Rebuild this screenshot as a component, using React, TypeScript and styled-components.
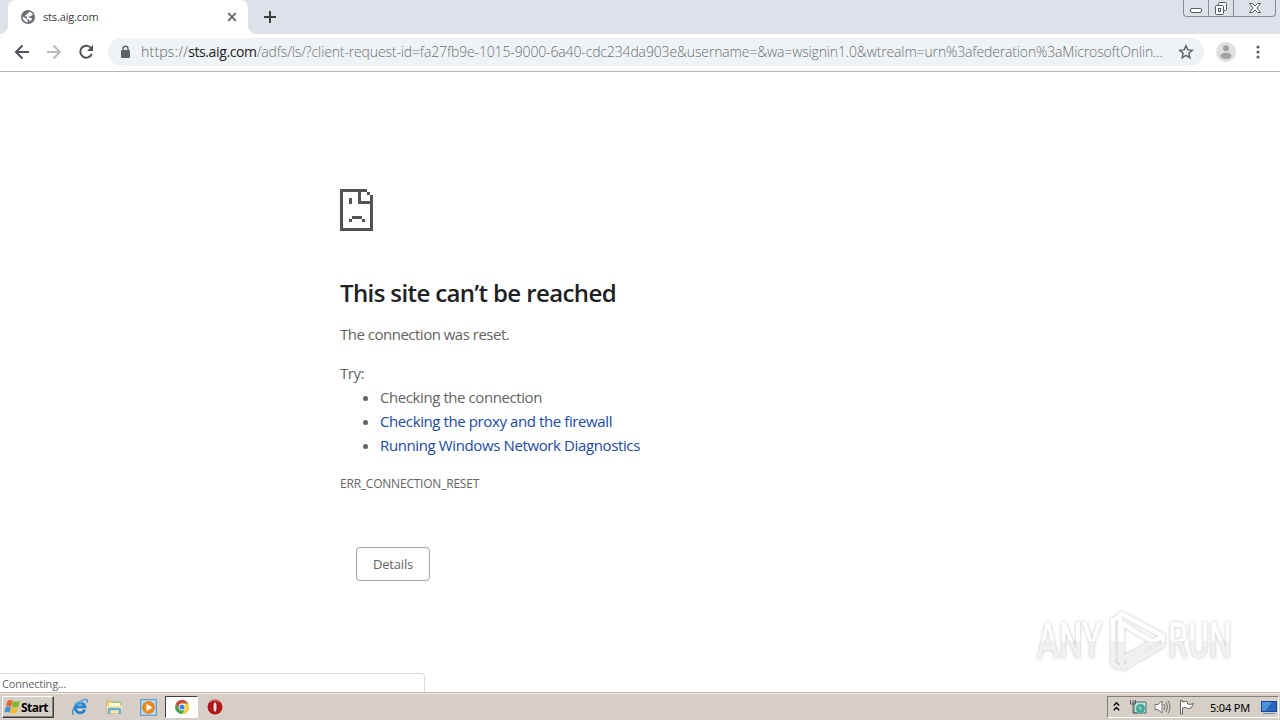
import React from "react";
import styled, { createGlobalStyle } from "styled-components";

const GlobalStyle = createGlobalStyle`
  * {
    box-sizing: border-box;
  }

  body {
    margin: 0;
    overflow: hidden;
    background: #ffffff;
    font-family: "Open Sans", "Noto Sans", sans-serif;
  }

  svg {
    display: block;
    flex: none;
  }
`;

const Screen = styled.div`
  position: relative;
  display: flex;
  flex-direction: column;
  width: 1280px;
  height: 720px;
`;

const TabStrip = styled.header`
  display: flex;
  align-items: flex-start;
  height: 34px;
  padding-left: 8px;
  background: #dee1e8;
`;

const Tab = styled.div`
  position: relative;
  display: flex;
  align-items: center;
  width: 240px;
  height: 34px;
  padding: 0 11px 0 13px;
  border-radius: 8px 8px 0 0;
  background: #ffffff;

  &::before,
  &::after {
    content: "";
    position: absolute;
    bottom: 0;
    width: 8px;
    height: 8px;
  }

  &::before {
    left: -8px;
    background: radial-gradient(circle at 0 0, #dee1e8 7.5px, #ffffff 8px);
  }

  &::after {
    right: -8px;
    background: radial-gradient(circle at 100% 0, #dee1e8 7.5px, #ffffff 8px);
  }
`;

const Text = styled.span<{ $size: number; $spacing?: number; $color?: string }>`
  font-size: ${(p) => p.$size}px;
  letter-spacing: ${(p) => p.$spacing ?? 0}px;
  color: ${(p) => p.$color ?? "#3c4043"};
  white-space: nowrap;
`;

const TabTitle = styled(Text)`
  flex: 1;
  margin: 0 0 2px 8px;
`;

const NewTab = styled.div`
  margin: 10px 0 0 15px;
`;

const WindowControls = styled.div`
  display: flex;
  width: 93px;
  height: 17px;
  margin: 0 4px 0 auto;
  border: 1px solid #878c96;
  border-top: 0;
  border-radius: 0 0 4px 4px;
`;

const WindowButton = styled.div<{ $width: number }>`
  display: flex;
  justify-content: center;
  width: ${(p) => p.$width}px;

  & + & {
    border-left: 1px solid #878c96;
  }
`;

const Toolbar = styled.nav`
  display: flex;
  align-items: center;
  height: 38px;
  padding: 0 13px 2px 13px;
  border-bottom: 1px solid #b4b6b8;
  background: #ffffff;
`;

const NavIcons = styled.div`
  display: flex;
  gap: 14px;
  width: 95px;
`;

const AddressBar = styled.div`
  display: flex;
  align-items: center;
  width: 1096px;
  height: 28px;
  padding: 0 10px 0 10px;
  border-radius: 14px;
  background: #f0f3f5;
`;

const Url = styled.div`
  flex: 1;
  display: flex;
  margin-left: 9px;
  font-weight: 300;
`;

const Host = styled(Text)`
  font-weight: 400;
`;

const Page = styled.main`
  flex: 1;
  padding: 117px 0 0 340px;
  color: #646464;
`;

const Title = styled.h1`
  margin: 47px 0 0;
  font: 600 24px/30px "Open Sans", "Noto Sans", sans-serif;
  letter-spacing: -0.61px;
  color: #202124;
`;

const Message = styled.p`
  margin: 14px 0 0;
  font-size: 15px;
  line-height: 24px;
  letter-spacing: -0.5px;

  & + & {
    margin-top: 15px;
  }
`;

const Suggestions = styled.ul`
  margin: 0;
  padding: 0 0 0 40px;
  font-size: 15px;
  line-height: 24px;
`;

const Suggestion = styled.li<{ $spacing: number }>`
  letter-spacing: ${(p) => p.$spacing}px;
`;

const Link = styled.a`
  color: #1a4a9f;
  text-decoration: none;
`;

const ErrorCode = styled.div`
  margin-top: 17px;
  font-size: 12px;
  line-height: 20px;
  letter-spacing: -0.22px;
`;

const DetailsButton = styled.button`
  display: block;
  width: 74px;
  height: 34px;
  margin: 53px 0 0 16px;
  padding: 0;
  border: 1px solid #a0a2a5;
  border-radius: 4px;
  background: #ffffff;
  color: #646464;
  font: 13px "Open Sans", "Noto Sans", sans-serif;
  letter-spacing: -0.2px;
`;

const StatusBubble = styled.div`
  position: absolute;
  left: 0;
  bottom: 28px;
  width: 425px;
  height: 19px;
  padding-left: 2px;
  border: 1px solid #dadada;
  border-width: 1px 1px 0 0;
  border-radius: 0 4px 0 0;
  background: #ffffff;
  line-height: 16px;
`;

const Watermark = styled.div`
  position: absolute;
  left: 1037px;
  top: 608px;
  display: flex;
  align-items: center;
  width: 200px;
  height: 66px;
  filter: drop-shadow(0 0 1.5px rgba(0, 0, 0, 0.25));
`;

const WatermarkWord = styled.span<{ $width: number; $scale: number }>`
  width: ${(p) => p.$width}px;
  font: 500 50px/66px Roboto, sans-serif;
  color: transparent;
  background: none;
  white-space: nowrap;
  transform: scaleX(${(p) => p.$scale});
  transform-origin: 0 50%;

  span {
    background: linear-gradient(#ffffff 50%, #f1f1f1 50%);
    background-clip: text;
    -webkit-background-clip: text;
  }
`;

const Taskbar = styled.footer`
  display: flex;
  align-items: flex-end;
  height: 28px;
  padding: 0 1px 2px 2px;
  border-top: 1px solid #bdbab3;
  background: #d6cfc7;
  box-shadow: inset 0 1px #f2efea;
`;

const StartButton = styled.div`
  display: flex;
  align-items: center;
  width: 52px;
  height: 22px;
  padding-left: 1px;
  border: 1px solid;
  border-color: #ffffff #404040 #404040 #ffffff;
  box-shadow: inset -1px -1px #848078;
  font: bold 12px "Noto Sans", sans-serif;
  letter-spacing: -0.5px;
  color: #000000;
`;

const QuickLaunch = styled.div`
  display: flex;
  margin-left: 9px;
`;

const TaskItem = styled.div<{ $active?: boolean }>`
  display: flex;
  align-items: center;
  justify-content: center;
  width: ${(p) => (p.$active ? 33 : 34)}px;
  height: 22px;
  border: 1px solid;
  border-color: ${(p) => (p.$active ? "#404040 #ffffff #ffffff #404040" : "transparent")};
  background: ${(p) => (p.$active ? "#ffffff" : "transparent")};
`;

const Tray = styled.div`
  display: flex;
  align-items: center;
  width: 172px;
  height: 22px;
  margin-left: auto;
  padding-left: 5px;
  border: 1px solid;
  border-color: #848078 #ffffff #ffffff #848078;
`;

const Clock = styled.span`
  width: 51px;
  margin-left: 15px;
  font: 11px "Noto Sans", sans-serif;
  letter-spacing: -0.2px;
  color: #000000;
  white-space: nowrap;
`;

const GlobeIcon = () => (
  <svg width="14" height="14" viewBox="0 0 14 14">
    <circle cx="7" cy="7" r="7" fill="#696d72" />
    <path d="M1.5 6.500 5 8.500l1.500.5v2.500l.8 1A5.600 5.600 0 0 1 1.500 6.500ZM4.500 5l2-1 1-1.800L9.500 2A5.500 5.500 0 0 1 12 4.800L10.500 5.500 9 6.500H7.500l.5 1.200 2.500.2.500 1.500-2.300 2.200-.7-2L6 8.500V6.500H4Z" fill="#fff" />
  </svg>
);

const FileSadIcon = () => (
  <svg width="33" height="42" viewBox="0 0 33 42" fill="#535353" shapeRendering="crispEdges">
    <path fillRule="evenodd" d="M0 0h27v3h3v3h3v36H0ZM3 3v36h27V15H18V3ZM21 3v9h9V9h-3V6h-3V3Z" />
    <path fill="#fff" d="M21 3h6v3h3v6h-9Z" />
    <path d="M27 3h3v3h-3ZM9 9h3v6H9ZM12 27h10v3H12ZM9 30h3v3H9ZM22 30h3v3h-3Z" />
  </svg>
);

const WindowsIcon = () => (
  <svg width="17" height="16" viewBox="0 0 17 16">
    <path d="M3.500 1.700Q6 .3 8.600 1.700L7.100 7.600Q5 6.200 2 7.600Z" fill="#e8662c" />
    <path d="M9 2Q12 3.500 16 1.700L14.400 7.400Q11.200 9 7.700 7.800Z" fill="#82b735" />
    <path d="M1.800 8Q4.600 6.700 7 8.200L5.500 13.700Q3.300 12.400.3 13.600Z" fill="#438fd4" />
    <path d="M7.500 8.300Q10.800 9.600 14.200 8L12.600 13.700Q9.300 15.300 6 13.900Z" fill="#f5bd28" />
  </svg>
);

const ExplorerIcon = () => (
  <svg width="18" height="18" viewBox="0 0 18 18" fill="none">
    <path d="M13.800 11.500A5 5 0 1 1 14 8.800H5.500" stroke="#2185cf" strokeWidth="2.800" />
    <path d="M3 16.500C-.5 16 2.500 8 8.500 4s9-3 7.200.8" stroke="#3a8fd0" strokeWidth="1.300" />
    <path d="M5 6.500a5 5 0 0 1 6-2" stroke="#79c8ef" />
  </svg>
);

const FolderIcon = () => (
  <svg width="17" height="17" viewBox="0 0 17 17">
    <path d="M1 2h5l1 2h8v10H1Z" fill="#efd477" stroke="#cfab4c" strokeWidth=".7" />
    <path d="M3 4h11v3H3Z" fill="#fffbd6" />
    <path d="M7 3h7" stroke="#69b978" />
    <path d="M1 7h15v7H1Z" fill="#f8e9a5" />
    <path d="M3 15v-4q0-1 1-1h9q1 0 1 1v4" stroke="#67aedb" strokeWidth="2.500" fill="none" />
  </svg>
);

const MediaIcon = () => (
  <svg width="17" height="17" viewBox="0 0 17 17">
    <rect x=".7" y=".7" width="15.600" height="15.600" fill="#b9dcf2" stroke="#4d92c9" />
    <circle cx="8.500" cy="8.500" r="6" fill="#ef891b" stroke="#db7415" strokeWidth=".7" />
    <path d="m6.500 4.700 6 3.800-6 3.800Z" fill="#fff" />
  </svg>
);

const ChromeIcon = () => (
  <svg width="14" height="14" viewBox="0 0 14 14">
    <circle cx="7" cy="7" r="7" fill="#42a553" />
    <path d="M.9 3.500A7 7 0 0 1 13.100 3.500H7L4 8.700Z" fill="#dd4a3c" />
    <path d="M13.100 3.500A7 7 0 0 1 7 14L10 8.700 7 3.500Z" fill="#fbcf38" />
    <circle cx="7" cy="7" r="3.400" fill="#fff" />
    <circle cx="7" cy="7" r="2.600" fill="#4285d6" />
  </svg>
);

const OperaIcon = () => (
  <svg width="16" height="16" viewBox="0 0 16 16">
    <circle cx="8" cy="8" r="7.500" fill="#b5151b" />
    <path d="M3 3.500a7 7 0 0 1 10 0" stroke="#e46561" fill="none" />
    <ellipse cx="8" cy="8" rx="2.100" ry="5.300" fill="#f4dedb" stroke="#8c0c12" />
  </svg>
);

const PlayMark = () => (
  <svg width="62" height="66" viewBox="0 0 62 66" fill="none" strokeWidth="4.500" strokeLinejoin="round">
    <defs>
      <linearGradient id="mark" gradientUnits="userSpaceOnUse" x1="0" y1="0" x2="0" y2="66">
        <stop offset=".5" stopColor="#ffffff" />
        <stop offset=".5" stopColor="#f1f1f1" />
      </linearGradient>
    </defs>
    <g stroke="url(#mark)">
      <path d="M13 9 7 12v44l7 4M14 5v50" />
      <path d="M14 5 57 28 16 51V15l31 19" />
      <path d="m16 61 41-24V28M16 61v-8" />
    </g>
  </svg>
);

const App = () => {
  return (
    <>
      <GlobalStyle />
      <Screen>
        <TabStrip>
          <Tab>
            <GlobeIcon />
            <TabTitle $size={11} $spacing={-0.15}>sts.aig.com</TabTitle>
            <svg width="10" height="10" viewBox="0 0 10 10" stroke="#5f6368" strokeWidth="1.700">
              <path d="m1.200 1.200 7.600 7.600m0-7.600L1.200 8.800" />
            </svg>
          </Tab>
          <NewTab>
            <svg width="14" height="14" viewBox="0 0 14 14" stroke="#3c4043" strokeWidth="2">
              <path d="M7 1v12M1 7h12" />
            </svg>
          </NewTab>
          <WindowControls>
            <WindowButton $width={24}>
              <svg width="14" height="16" viewBox="0 0 14 16">
                <rect x="1.500" y="8.500" width="11" height="4" rx="1.500" fill="#fff" stroke="#565d69" />
              </svg>
            </WindowButton>
            <WindowButton $width={25}>
              <svg width="14" height="16" viewBox="0 0 14 16" fill="#fff" stroke="#565d69">
                <rect x="4.500" y="2.500" width="8" height="8" rx="1" />
                <rect x="1.500" y="5.500" width="8" height="9" rx="1" />
                <rect x="4.500" y="8.500" width="2" height="3" />
              </svg>
            </WindowButton>
            <WindowButton $width={42}>
              <svg width="14" height="16" viewBox="0 0 14 16" fill="#fff" stroke="#565d69">
                <path d="M1.500 3.500h3L7 6l2.500-2.500h3L9 8l3.500 4.500h-3L7 10l-2.500 2.500h-3L5 8Z" />
              </svg>
            </WindowButton>
          </WindowControls>
        </TabStrip>

        <Toolbar>
          <NavIcons>
            <svg width="18" height="18" viewBox="0 0 18 18" fill="none" stroke="#4f5358" strokeWidth="2">
              <path d="M16 9H3m6.500-6.500L3 9l6.500 6.500" />
            </svg>
            <svg width="18" height="18" viewBox="0 0 18 18" fill="none" stroke="#b9bbbd" strokeWidth="2">
              <path d="M2 9h13M8.500 2.500 15 9l-6.500 6.500" />
            </svg>
            <svg width="18" height="18" viewBox="0 0 18 18" fill="none" stroke="#4f5358" strokeWidth="2">
              <path d="M14.200 5.200A6 6 0 1 0 14.800 11" />
              <path d="M16 2v6h-6Z" fill="#4f5358" stroke="none" />
            </svg>
          </NavIcons>
          <AddressBar>
            <svg width="14" height="16" viewBox="0 0 14 16">
              <rect x="3" y="6" width="9" height="8" rx="1" fill="#5f6368" />
              <path d="M5 7V4.700a2.500 2.500 0 0 1 5 0V7" fill="none" stroke="#5f6368" strokeWidth="1.400" />
            </svg>
            <Url>
              <Text $size={14} $spacing={0.22} $color="#5f6368">https://</Text>
              <Host $size={14} $spacing={-0.38} $color="#202124">sts.aig.com</Host>
              <Text $size={14} $spacing={-0.14} $color="#6c7074">
                /adfs/ls/?client-request-id=fa27fb9e-1015-9000-6a40-cdc234da903e&amp;username=&amp;wa=wsignin1.0&amp;wtrealm=urn%3afederation%3aMicrosoftOnlin...
              </Text>
            </Url>
            <svg width="16" height="16" viewBox="0 0 16 16" fill="none" stroke="#5f6368" strokeWidth="1.500">
              <path d="m8 1.800 1.800 4.100 4.500.4-3.400 3 1 4.400L8 11.400l-3.900 2.300 1-4.400-3.400-3 4.500-.4Z" />
            </svg>
          </AddressBar>
          <svg width="20" height="20" viewBox="0 0 20 20" style={{ marginLeft: 12 }}>
            <circle cx="10" cy="10" r="10" fill="#dedfe0" />
            <circle cx="10" cy="6.300" r="3" fill="#a0a1a3" />
            <ellipse cx="10" cy="13.800" rx="5.500" ry="3.100" fill="#a0a1a3" />
          </svg>
          <svg width="4" height="16" viewBox="0 0 4 16" fill="#5f6368" style={{ marginLeft: 20 }}>
            <circle cx="2" cy="3" r="1.600" />
            <circle cx="2" cy="8" r="1.600" />
            <circle cx="2" cy="13" r="1.600" />
          </svg>
        </Toolbar>

        <Page>
          <FileSadIcon />
          <Title>This site can’t be reached</Title>
          <Message>The connection was reset.</Message>
          <Message>Try:</Message>
          <Suggestions>
            <Suggestion $spacing={-0.42}>Checking the connection</Suggestion>
            <Suggestion $spacing={-0.4}>
              <Link>Checking the proxy and the firewall</Link>
            </Suggestion>
            <Suggestion $spacing={-0.38}>
              <Link>Running Windows Network Diagnostics</Link>
            </Suggestion>
          </Suggestions>
          <ErrorCode>ERR_CONNECTION_RESET</ErrorCode>
          <DetailsButton>Details</DetailsButton>
        </Page>

        <Taskbar>
          <StartButton>
            <WindowsIcon />
            Start
          </StartButton>
          <QuickLaunch>
            <TaskItem><ExplorerIcon /></TaskItem>
            <TaskItem><FolderIcon /></TaskItem>
            <TaskItem><MediaIcon /></TaskItem>
            <TaskItem $active><ChromeIcon /></TaskItem>
            <TaskItem><OperaIcon /></TaskItem>
          </QuickLaunch>
          <Tray>
            <svg width="7" height="12" viewBox="0 0 7 12" fill="none" stroke="#000" strokeWidth="1.400">
              <path d="m.8 4.500 2.700-2.700 2.700 2.700M.8 9.200l2.700-2.700 2.700 2.700" />
            </svg>
            <svg width="17" height="16" viewBox="0 0 17 16" style={{ marginLeft: 10 }}>
              <path d="M4 3h12v11H4Z" fill="#bde4dc" stroke="#496c70" />
              <circle cx="10.500" cy="9.500" r="4.500" fill="#43a5a0" />
              <path d="m8 7 3 1 1 2-2 2Z" fill="#8ad590" />
              <path d="M.5 1v4h5V1M3 1v13h4" fill="none" stroke="#5a6260" />
            </svg>
            <svg width="17" height="16" viewBox="0 0 17 16" fill="#fff" stroke="#77736e" style={{ marginLeft: 7 }}>
              <path d="M1 5.500h3L8 2v12L4 10.500H1Z" />
              <path d="M10 5q2 3 0 6M12 3q3 5 0 10M14 1.500q4 6.500 0 13" fill="none" />
            </svg>
            <svg width="17" height="16" viewBox="0 0 17 16" fill="#fff" stroke="#66625d" style={{ marginLeft: 7 }}>
              <path d="M2.500 15V1.500h2V3q3-1.500 5 0v2q3 1 6-.5L13 9q-3 1-4.500 0-2-1-4 0v6Z" />
            </svg>
            <Clock>5:04 PM</Clock>
            <svg width="16" height="16" viewBox="0 0 16 16">
              <rect x=".5" y="2.500" width="15" height="10" fill="#2867bd" stroke="#16498d" />
              <path d="M1 3h10L4 12H1Z" fill="#4c91db" />
              <path d="M2 14.500h12" stroke="#7292b9" />
            </svg>
          </Tray>
        </Taskbar>

        <StatusBubble>
          <Text $size={11} $spacing={-0.2} $color="#646464">Connecting...</Text>
        </StatusBubble>

        <Watermark>
          <WatermarkWord $width={69} $scale={0.66}><span>ANY</span></WatermarkWord>
          <PlayMark />
          <WatermarkWord $width={67} $scale={0.64}><span>RUN</span></WatermarkWord>
        </Watermark>
      </Screen>
    </>
  );
};

export default App;
